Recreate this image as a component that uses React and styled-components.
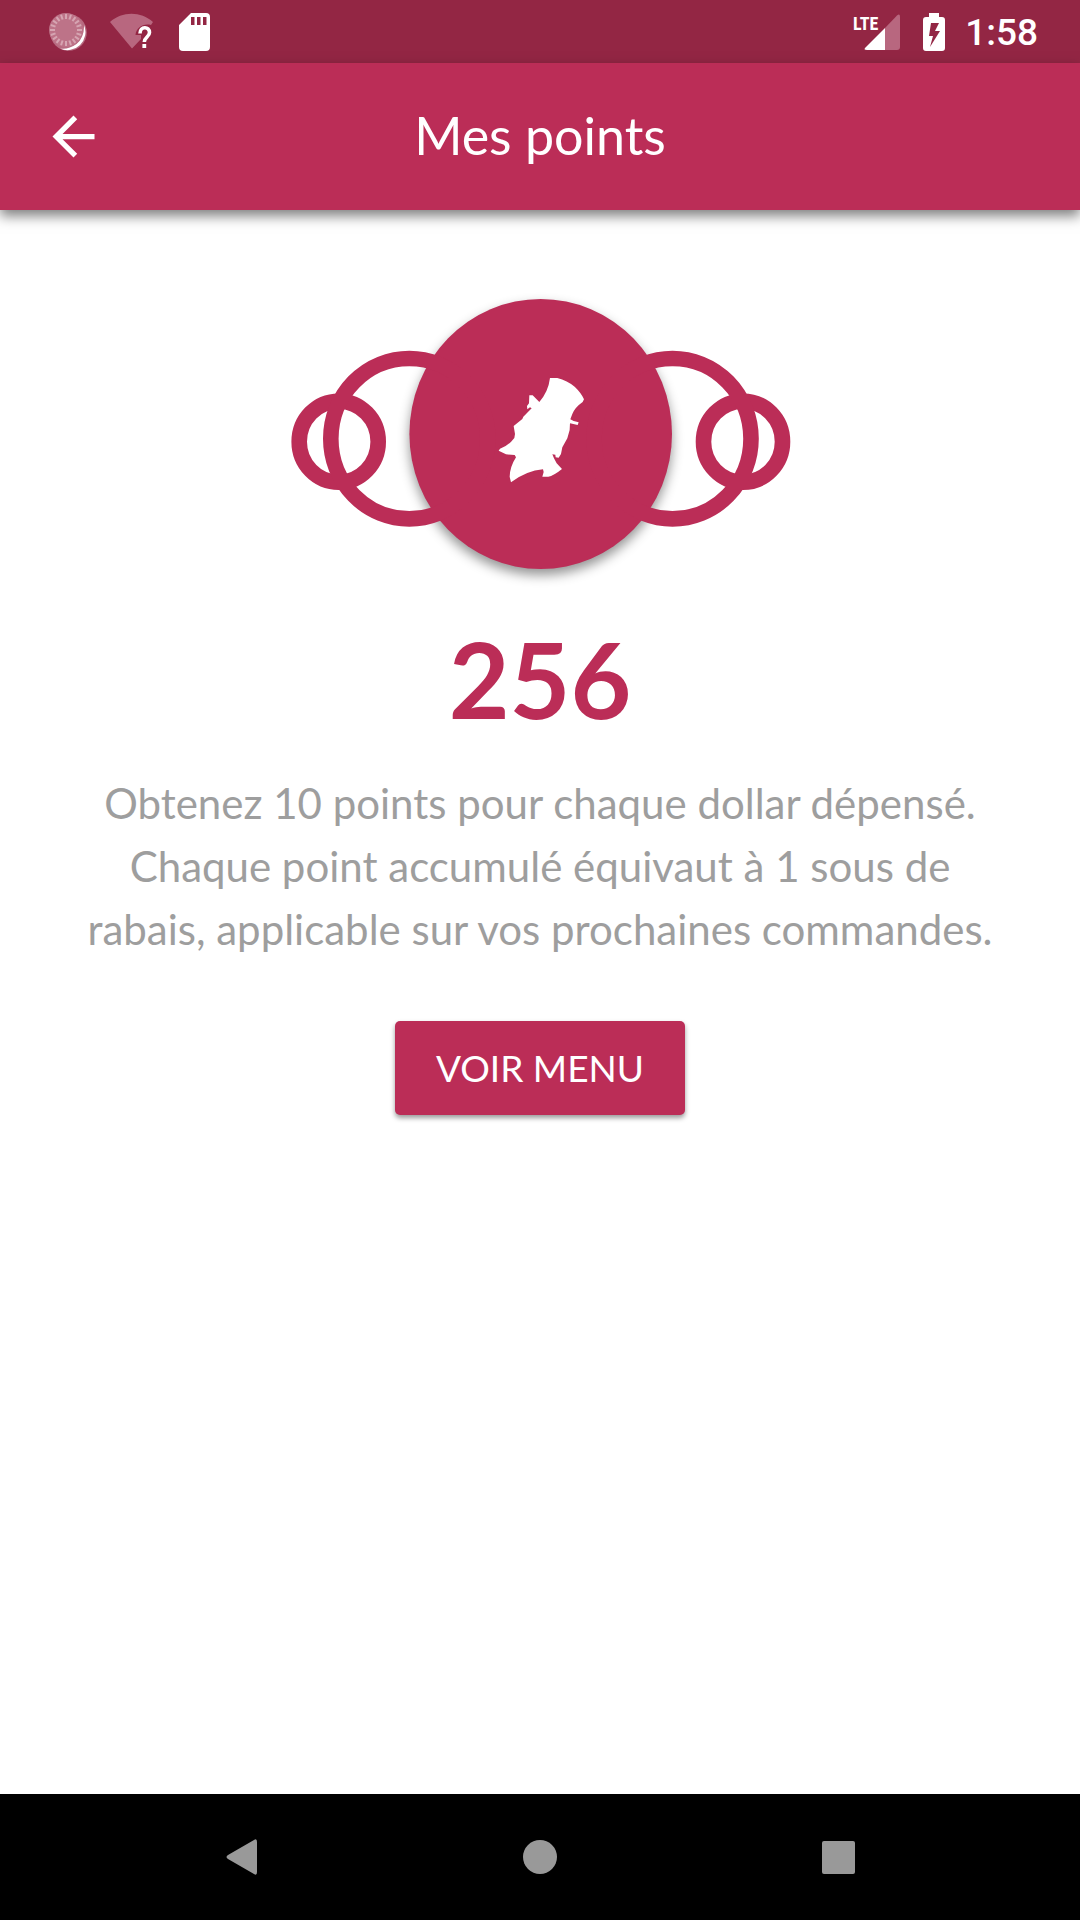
import React from "react";
import styled, { createGlobalStyle } from "styled-components";

const GlobalStyle = createGlobalStyle`
  * {
    box-sizing: border-box;
    margin: 0;
    padding: 0;
  }

  :root {
    --color-primary: #bb2d57;
    --color-primary-dark: #932644;
    --color-grey: #9e9e9e;
  }

  body {
    background-color: white;
    font-family: Lato, "Liberation Sans", sans-serif;
  }
`;

const Screen = styled.div`
  min-height: 100vh;

  display: flex;
  flex-direction: column;
`;

const StatusBar = styled.div`
  height: 63px;
  padding: 0 42px 0 48px;

  display: flex;
  align-items: center;
  justify-content: space-between;

  background-color: var(--color-primary-dark);
  color: white;
`;

const StatusGroup = styled.div`
  display: flex;
  align-items: center;
  gap: ${(props) => props.$gap}px;
`;

const StatusIcon = styled.svg`
  display: block;
  flex-shrink: 0;
`;

const Clock = styled.time`
  font-family: Roboto, sans-serif;
  font-size: 37px;
  font-weight: 500;
  line-height: 60px;
  padding-top: 3px;
`;

const AppBar = styled.header`
  height: 147px;
  padding: 0 42px;

  display: grid;
  grid-template-columns: 63px 1fr 63px;
  align-items: center;

  background-color: var(--color-primary);
  color: white;
  box-shadow: 0 6px 12px rgba(0, 0, 0, 0.5);
`;

const BackButton = styled.button`
  height: 63px;
  width: 63px;

  display: flex;
  align-items: center;

  border: none;
  background: none;
  color: inherit;
  cursor: pointer;
`;

const Title = styled.h1`
  padding-bottom: 4px;

  font-size: 52px;
  font-weight: 400;
  line-height: 64px;
  text-align: center;
`;

const Content = styled.main`
  flex: 1;
  padding: 84px 84px 0;

  display: flex;
  flex-direction: column;
  align-items: center;
`;

const Emblem = styled.svg`
  display: block;
  overflow: visible;

  .ring {
    fill: none;
    stroke: var(--color-primary);
    stroke-width: 15.6;
  }

  .disc {
    fill: var(--color-primary);
    filter: drop-shadow(0 6px 6px rgba(0, 0, 0, 0.42));
  }
`;

const Points = styled.p`
  margin-top: 41px;

  font-size: 105px;
  font-weight: 700;
  line-height: 126px;
  color: var(--color-primary);
`;

const Description = styled.p`
  max-width: 912px;
  margin-top: 31px;

  font-size: 42px;
  line-height: 63px;
  text-align: center;
  color: var(--color-grey);
`;

const MenuButton = styled.button`
  height: 94px;
  margin-top: 60px;
  padding: 0 41px;

  border: none;
  border-radius: 5px;
  background-color: var(--color-primary);
  box-shadow: 0 3px 5px rgba(0, 0, 0, 0.4);

  font-family: inherit;
  font-size: 37px;
  line-height: 44px;
  color: white;
  cursor: pointer;
`;

const NavBar = styled.nav`
  height: 126px;

  display: flex;
  align-items: center;
  justify-content: center;
  gap: 172px;

  background-color: black;
`;

const NavButton = styled.button`
  height: 126px;
  width: 126px;

  display: flex;
  align-items: center;
  justify-content: center;

  border: none;
  background: none;
  color: #999999;
  cursor: pointer;
`;

const ticks = Array.from({ length: 20 }, (_, i) => i * 18);

const SyncIcon = () => (
  <StatusIcon width="40" height="40" viewBox="0 0 40 40">
    <circle cx="20.5" cy="20.5" r="18.3" fill="#b76a80" />
    <path
      d="M36 13A18 18 0 0 1 12 36.500Q20 38 28.500 32Q36.500 25 36 13Z"
      fill="white"
    />
    <circle cx="18" cy="18" r="17" fill="#bd7388" />
    <g stroke="#d6a5b2" strokeWidth="2">
      {ticks.map((angle) => (
        <path key={angle} d="M18 2V7" transform={`rotate(${angle} 18 18)`} />
      ))}
    </g>
  </StatusIcon>
);

const WifiIcon = () => (
  <StatusIcon width="47" height="38" viewBox="0 0 47 38">
    <path
      d="M0 9C12-2 31-2 43 9L41 12C33 10 26 15 25.500 22H31V26L22 35.500Z"
      fill="#b8677f"
    />
    <path
      d="M30 20.500C30 13 39.500 13 39.500 19.500C39.500 24 34.300 24 34.300 29"
      fill="none"
      stroke="white"
      strokeWidth="3.6"
    />
    <rect x="32.400" y="31" width="3.800" height="4" fill="white" />
  </StatusIcon>
);

const SdCardIcon = () => (
  <StatusIcon width="31" height="38" viewBox="0 0 31 38">
    <path
      fillRule="evenodd"
      d="M12 0H27Q31 0 31 4V34Q31 38 27 38H4Q0 38 0 34V12ZM12 4V12H15.500V4ZM18 4V12H21.500V4ZM24 4V12H27.500V4Z"
      fill="white"
    />
  </StatusIcon>
);

const SignalIcon = () => (
  <StatusIcon width="50" height="38" viewBox="0 0 50 38">
    <path d="M32 15L44 2.500Q47 0 47 4V34Q47 37 44 37H32Z" fill="#b8677f" />
    <path d="M32 15V37H14Q10 37 12.500 34.500Z" fill="white" />
    <text
      x="0"
      y="17"
      fill="white"
      fontFamily="'Roboto Condensed', 'Liberation Sans Narrow', sans-serif"
      fontSize="18"
      fontWeight="700"
    >
      LTE
    </text>
  </StatusIcon>
);

const BatteryIcon = () => (
  <StatusIcon width="22" height="38" viewBox="0 0 22 38">
    <path
      fillRule="evenodd"
      d="M6 0H16V4H19Q22 4 22 7V35Q22 38 19 38H3Q0 38 0 35V7Q0 4 3 4H6ZM8 10L6 23H10L7 34L17 18H12L16 10Z"
      fill="white"
    />
  </StatusIcon>
);

const App = () => {
  return (
    <>
      <GlobalStyle />

      <Screen>
        <StatusBar>
          <StatusGroup $gap={22}>
            <SyncIcon />
            <WifiIcon />
            <SdCardIcon />
          </StatusGroup>

          <StatusGroup $gap={20}>
            <SignalIcon />
            <BatteryIcon />
            <Clock>1:58</Clock>
          </StatusGroup>
        </StatusBar>

        <AppBar>
          <BackButton aria-label="Retour">
            <svg width="63" height="63" viewBox="0 0 24 24">
              <path
                d="M20 11H7.830l5.590-5.590L12 4l-8 8 8 8 1.410-1.410L7.830 13H20v-2z"
                fill="currentColor"
              />
            </svg>
          </BackButton>

          <Title>Mes points</Title>
        </AppBar>

        <Content>
          {/* EMBLEM */}
          <Emblem width="500" height="280" viewBox="290 294 500 280">
            <ellipse className="disc" cx="540.7" cy="434" rx="131.300" ry="135" />
            <ellipse className="ring" cx="338.7" cy="441.7" rx="39.500" ry="40.500" />
            <ellipse className="ring" cx="743" cy="441.7" rx="39.500" ry="40.500" />
            <ellipse className="ring" cx="409.3" cy="438.7" rx="78.500" ry="80.200" />
            <ellipse className="ring" cx="672.5" cy="438.7" rx="78.500" ry="80.200" />
            <path
              transform="translate(480 360) scale(0.3333)"
              d="M210 54L232 54Q262 62 284 80Q305 100 312 118L308 126Q285 142 277 162L271 178L281 183L296 187L293 195L280 192L270 190L269 210L262 235L247 262L243 282L236 293L227 292L226 284L217 283L222 295L230 310L246 327Q220 348 205 350L187 350L191 336L189 328Q140 332 93 367L89 350Q90 320 108 292L104 285L78 283L56 272L60 266Q85 258 103 234L105 222L101 198L127 177L130 170L155 145L150 142L142 148L141 138L147 130L148 106L158 106L178 126Q205 95 210 54Z"
              fill="white"
            />
          </Emblem>

          <Points>256</Points>

          <Description>
            Obtenez 10 points pour chaque dollar dépensé. Chaque point accumulé
            équivaut à 1 sous de rabais, applicable sur vos prochaines
            commandes.
          </Description>

          <MenuButton>VOIR MENU</MenuButton>
        </Content>

        <NavBar>
          <NavButton aria-label="Précédent">
            <svg width="32" height="36" viewBox="0 0 32 36">
              <path
                d="M28 1Q31 -1 31 3V33Q31 37 28 35L2 20Q-1 18 2 16Z"
                fill="currentColor"
              />
            </svg>
          </NavButton>

          <NavButton aria-label="Accueil">
            <svg width="34" height="34" viewBox="0 0 34 34">
              <circle cx="17" cy="17" r="17" fill="currentColor" />
            </svg>
          </NavButton>

          <NavButton aria-label="Applications récentes">
            <svg width="33" height="33" viewBox="0 0 33 33">
              <rect width="33" height="33" rx="2" fill="currentColor" />
            </svg>
          </NavButton>
        </NavBar>
      </Screen>
    </>
  );
};

export default App;
